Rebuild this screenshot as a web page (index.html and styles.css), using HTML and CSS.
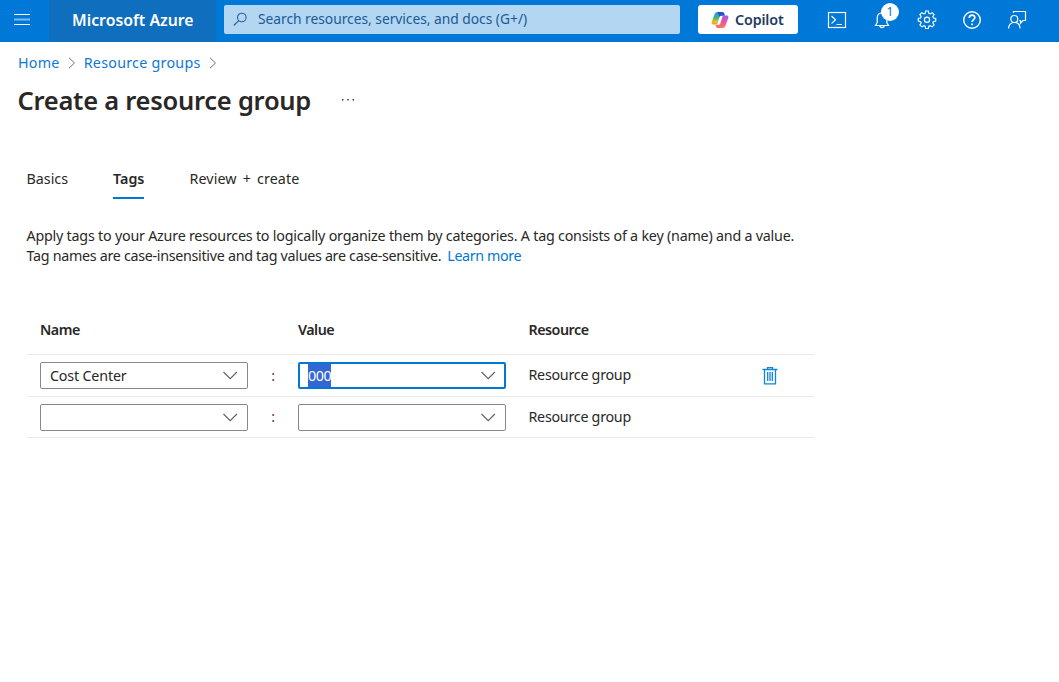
FILE: index.html
```html
<!DOCTYPE html>
<html lang="en">
<head>
<meta charset="utf-8">
<title>Create a resource group - Microsoft Azure</title>
<link rel="stylesheet" href="styles.css">
</head>
<body>
<header class="topbar">
  <button class="menu" aria-label="Menu"><svg width="16" height="12" viewBox="0 0 16 12"><path d="M0 .5h16M0 10.500h16" stroke="#fff" fill="none"/><path d="M0 5.500h16" stroke="#7dbaec" stroke-width="2"/></svg></button>
  <div class="brand"><span>Microsoft Azure</span></div>
  <div class="search">
    <svg width="15" height="15" viewBox="0 0 15 15" fill="none" stroke="#2a6199" stroke-width="1.1"><circle cx="8.800" cy="5.500" r="4.300"/><path d="M5.700 8.600L.8 13.500"/></svg>
    <span>Search resources, services, and docs (G+/)</span>
  </div>
  <button class="copilot">
    <svg width="18" height="16" viewBox="0 0 18 16">
      <defs>
        <linearGradient id="ga" x1="0" y1="0" x2="0" y2="1"><stop offset="0" stop-color="#1f9bea"/><stop offset=".45" stop-color="#3bb57c"/><stop offset=".8" stop-color="#f2c028"/><stop offset="1" stop-color="#f58a2c"/></linearGradient>
        <linearGradient id="gb" x1="0" y1="0" x2="0" y2="1"><stop offset="0" stop-color="#9b5cf0"/><stop offset=".5" stop-color="#e856a4"/><stop offset="1" stop-color="#fb7c4c"/></linearGradient>
      </defs>
      <path d="M11.600 0h-5C4.800 0 3.900 1 3.300 2.900L1 9.300C.1 11.800.8 12.500 2.700 12.500h2.200c1 0 1.500-.6 1.900-1.900L8.600 4.800C9 3.600 9.600 3.200 10.800 3.200h1.900L12.300 1z" fill="url(#ga)"/>
      <path d="M6.400 0h5c1.200 0 1.800.8 2.200 2.400l.4 1.300h-3.200C9.500 3.700 9 3.900 8.600 5.100z" fill="#2251d1"/>
      <path d="M6.400 16h5c1.800 0 2.700-1 3.300-2.900L17 6.700C17.900 4.200 17.200 3.500 15.300 3.500h-2.200c-1 0-1.500.6-1.900 1.900l-1.800 5.800c-.4 1.200-1 1.600-2.200 1.600H4.600l.5 1.600c.3 1 .6 1.600 1.300 1.600z" fill="url(#gb)"/>
    </svg>
    <span>Copilot</span>
  </button>
  <nav class="tools">
    <svg width="20" height="20" viewBox="0 0 20 20"><rect x="1.500" y="2.500" width="17" height="15"/><path d="M4.500 6l4 3.800-4 3.800M9.500 14.500h5.500"/></svg>
    <span class="bell">
      <svg width="20" height="20" viewBox="0 0 20 20"><path d="M3.500 15.500h13l-1.700-3V8c0-3-2-5.200-4.800-5.200S5.200 5 5.200 8v4.500zM7.800 15.500c.2 2.700 4.200 2.700 4.400 0"/></svg>
      <b class="badge">1</b>
    </span>
    <svg width="20" height="20" viewBox="0 0 20 20"><path d="M8.600 1.400h2.800l.5 2.400 1.400.6 2.100-1.300 2 2-1.300 2.100.6 1.400 2.400.5v2.800l-2.400.5-.6 1.400 1.300 2.100-2 2-2.100-1.300-1.400.6-.5 2.400H8.600l-.5-2.400-1.400-.6-2.100 1.300-2-2 1.300-2.100-.6-1.400-2.400-.5V9.100l2.400-.5.6-1.400-1.300-2.100 2-2 2.100 1.300 1.400-.6z" transform="translate(.4 -.3) scale(.96)"/><circle cx="10" cy="9.800" r="2.600"/></svg>
    <svg width="20" height="20" viewBox="0 0 20 20"><circle cx="10" cy="10" r="8.300" stroke-width="1.400"/><path stroke-width="1.700" d="M7.300 8c0-3.900 5.700-3.700 5.500-.3-.1 2-2.700 2-2.700 4.400M10.100 13.400v1.800"/></svg>
    <svg width="20" height="20" viewBox="0 0 20 20"><path d="M6.500 3V1.500h12v9H16l-2.500 2.700v-2.700h-1.200"/><circle cx="7.300" cy="9" r="3.500"/><path d="M1.600 18.500c0-3.700 2.200-6 5.700-6s5.700 2.300 5.700 6"/></svg>
  </nav>
</header>
<main>
  <nav class="crumbs">
    <a class="home">Home</a>
    <svg width="8" height="12" viewBox="0 0 8 12"><path d="M1 .8L6.500 6 1 11.200"/></svg>
    <a class="groups">Resource groups</a>
    <svg width="8" height="12" viewBox="0 0 8 12"><path d="M1 .8L6.500 6 1 11.200"/></svg>
  </nav>
  <div class="heading">
    <h1>Create a resource group</h1>
    <svg width="14" height="2" viewBox="0 0 14 2"><path d="M1 0h1.400v1.400H1zM6.300 0h1.400v1.400H6.300zM11.600 0H13v1.400h-1.400z" fill="#323130"/></svg>
  </div>
  <nav class="tabs">
    <a class="tab basics">Basics</a>
    <a class="tab active">Tags</a>
    <a class="tab review">Review + create</a>
  </nav>
  <p class="intro"><span class="line-one">Apply tags to your Azure resources to logically organize them by categories. A tag consists of a key (name) and a value.</span><br><span class="line-two">Tag names are case-insensitive and tag values are case-sensitive.</span><a class="learn">Learn more</a></p>
  <section class="table">
    <div class="row head"><span>Name</span><span></span><span>Value</span><span class="res">Resource</span><span></span></div>
    <div class="row first">
      <div class="field"><span>Cost Center</span><svg width="16" height="9" viewBox="0 0 16 9"><path d="M1.500 1l6.700 6.700L14.900 1"/></svg></div>
      <span class="colon">:</span>
      <div class="field focus"><mark>000</mark><svg width="16" height="9" viewBox="0 0 16 9"><path d="M1.500 1l6.700 6.700L14.900 1"/></svg></div>
      <span class="res">Resource group</span>
      <svg class="trash" width="16" height="20" viewBox="0 0 16 20"><path d="M.5 3.500h15M5.500 3.300V1.600h5v1.700M2.500 3.500v14.300h11V3.500M5.700 6v9M8 6v9M10.300 6v9"/></svg>
    </div>
    <div class="row second">
      <div class="field"><span></span><svg width="16" height="9" viewBox="0 0 16 9"><path d="M1.500 1l6.700 6.700L14.900 1"/></svg></div>
      <span class="colon">:</span>
      <div class="field"><span></span><svg width="16" height="9" viewBox="0 0 16 9"><path d="M1.500 1l6.700 6.700L14.900 1"/></svg></div>
      <span class="res">Resource group</span>
      <span></span>
    </div>
  </section>
</main>
</body>
</html>
```
FILE: styles.css
```css
* { box-sizing: border-box; }
body {
  margin: 0;
  background: #fff;
  color: #292827;
  font: 14.3px/20px "Noto Sans", "Open Sans", sans-serif;
}
button { border: 0; padding: 0; background: none; font: inherit; }
svg { display: block; flex: none; }
.topbar { height: 42px; display: flex; background: #0078d7; }
.menu { width: 49px; padding: 0 0 2px 14px; display: flex; align-items: center; }
.brand {
  width: 167px; padding: 0 0 2px 23px; display: flex; align-items: center;
  background: #106ebe; color: #fff; font-size: 15.8px; font-weight: 600;
  letter-spacing: .01px; white-space: nowrap;
}
.search {
  width: 456px; height: 29px; margin: 5px 0 0 8px; padding-left: 9px;
  display: flex; align-items: center; gap: 10px;
  background: #b3d6f2; border-radius: 2px; color: #1b5a94; font-size: 13.8px;
  letter-spacing: -.02px; white-space: nowrap;
}
.search span { margin-top: -2px; }
.copilot {
  width: 100px; height: 29px; margin: 5px 0 0 18px; padding-left: 13px;
  display: flex; align-items: center; gap: 6px; background: #fff;
  border-radius: 3px; color: #243a5e; font-size: 14.3px; font-weight: 600;
  letter-spacing: -.15px;
}
.tools { margin-left: 29px; padding-bottom: 2px; display: flex; align-items: center; gap: 25px; }
.tools svg { fill: none; stroke: #fff; stroke-width: 1.2; }
.bell { position: relative; }
.badge {
  position: absolute; left: 9px; top: -7px; width: 18px; height: 18px;
  border-radius: 50%; background: #fff; color: #0078d7;
  font-size: 12px; font-weight: 400; line-height: 17px; text-align: center;
}
.crumbs { height: 41px; padding-left: 18px; display: flex; align-items: center; color: #0f78d4; }
.crumbs a { letter-spacing: .25px; }
.crumbs svg { fill: none; stroke: #77736f; stroke-width: 1; margin: 1px 8px 0 8px; }
.heading { height: 34px; padding-left: 17.500px; display: flex; align-items: center; gap: 30px; }
h1 { margin: 0; font-size: 25.500px; line-height: 34px; font-weight: 600; letter-spacing: -.26px; white-space: nowrap; }
.tabs { margin: 52px 0 0 26.500px; display: flex; gap: 45px; }
.tab { height: 30px; border-bottom: 2px solid transparent; white-space: nowrap; }
.tab.active { border-color: #0078d4; font-weight: 600; }
.review { letter-spacing: .1px; word-spacing: 2.200px; }
.intro { margin: 27px 0 0 26.500px; white-space: nowrap; letter-spacing: -.22px; }
.line-two { letter-spacing: -.3px; }
.learn { margin-left: 6px; color: #0078d4; letter-spacing: -.4px; }
.table { width: 787px; margin: 39px 0 0 27px; }
.row {
  display: grid; grid-template-columns: 208px 50px 208px 256px 52px;
  align-items: center; padding-left: 13px; border-bottom: 1px solid #ebebeb;
  letter-spacing: -.27px;
}
.head { height: 50px; font-weight: 600; letter-spacing: -.5px; }
.first { height: 42px; }
.second { height: 41px; }
.res { padding-left: 22.500px; }
.first .res { margin-top: -2px; }
.field {
  height: 27px; padding: 0 9px; display: flex; align-items: center;
  justify-content: space-between; border: 1px solid #8a8886; border-radius: 2px;
}
.field span { letter-spacing: -.18px; }
.focus { border: 2px solid #0078d4; padding: 0 8px; }
.field svg { fill: none; stroke: #605e5c; stroke-width: 1.1; }
mark { height: 23px; line-height: 23px; background: #3367d1; color: #fff; letter-spacing: -.4px; }
.colon { text-align: center; color: #762b2b; }
.trash { fill: none; stroke: #0f86d9; stroke-width: 1.3; }
```
